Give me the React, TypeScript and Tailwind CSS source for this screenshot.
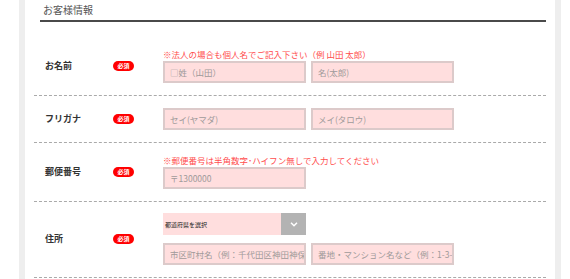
import React from "react";

const font = { fontFamily: '"Noto Sans CJK JP", "Noto Sans", sans-serif' };

function Badge() {
  return (
    <span className="flex h-[10px] w-[21px] items-center justify-center rounded-full bg-[#f00] text-[6px] leading-none font-bold text-white">
      必須
    </span>
  );
}

function Field({ placeholder }: { placeholder: string }) {
  return (
    <input
      type="text"
      placeholder={placeholder}
      className="h-[22px] w-[143px] border-2 border-[#dccaca] bg-[#ffdede] pl-[5px] text-[8.5px] text-[#333] outline-none placeholder:text-[#a09a9a]"
    />
  );
}

function Row({
  label,
  note,
  first,
  children,
}: {
  label: string;
  note?: string;
  first?: boolean;
  children: React.ReactNode;
}) {
  return (
    <div
      className={
        "flex items-center border-b border-dashed border-[#aaa] pb-[12px] pl-[11px] " +
        (first ? "pt-[21px]" : "pt-[11px]")
      }
    >
      <div className="w-[68px] text-[9px] leading-[12px] font-bold text-[#333]">{label}</div>
      <div className="flex w-[50px]">
        <Badge />
      </div>
      <div className="flex flex-col">
        {note && (
          <p className="mb-[1px] text-[8.5px] leading-[12px] text-[#ff4d4d]">{note}</p>
        )}
        {children}
      </div>
    </div>
  );
}

export default function App() {
  return (
    <div className="min-h-screen bg-white" style={font}>
      <div className="ml-[19px] h-[279px] w-[542px] overflow-hidden border-x-[6px] border-[#eeeeee] bg-white">
        <div className="mr-[9px] ml-[15px] border-b-2 border-[#4a4a4a] pt-[3px] pb-[3px] pl-[3px]">
          <h2 className="text-[10px] leading-[14px] text-[#555]">お客様情報</h2>
        </div>
        <div className="mt-[5px] mr-[9px] ml-[9px]">
          <Row first label="お名前" note="※法人の場合も個人名でご記入下さい（例 山田 太郎）">
            <div className="flex gap-[5px]">
              <Field placeholder="□姓（山田）" />
              <Field placeholder="名(太郎)" />
            </div>
          </Row>
          <Row label="フリガナ">
            <div className="flex gap-[5px] pt-[1px]">
              <Field placeholder="セイ(ヤマダ)" />
              <Field placeholder="メイ(タロウ)" />
            </div>
          </Row>
          <Row label="郵便番号" note="※郵便番号は半角数字･ハイフン無しで入力してください">
            <Field placeholder="〒1300000" />
          </Row>
          <Row label="住所">
            <div className="flex flex-col gap-[8px]">
              <div className="flex h-[22px] w-[143px] items-stretch">
                <div className="flex flex-1 items-center bg-[#ffdede] pl-[2px] text-[6px] text-[#222]">
                  都道府県を選択
                </div>
                <div className="flex w-[25px] items-center justify-center bg-[#b3b3b3]">
                  <svg width="8" height="5" viewBox="0 0 8 5" fill="none">
                    <path d="M1 0.8l3 3 3-3" stroke="#fff" strokeWidth="1.5" />
                  </svg>
                </div>
              </div>
              <div className="flex gap-[5px]">
                <Field placeholder="市区町村名（例：千代田区神田神保町）" />
                <Field placeholder="番地・マンション名など（例：1-3-5）" />
              </div>
            </div>
          </Row>
        </div>
      </div>
    </div>
  );
}
